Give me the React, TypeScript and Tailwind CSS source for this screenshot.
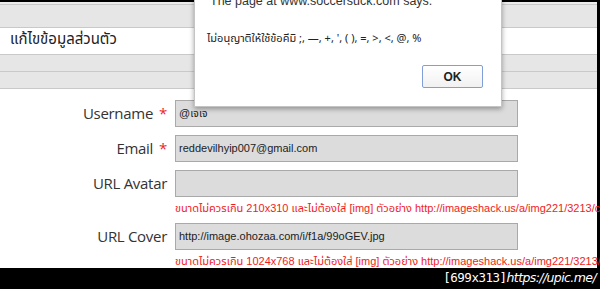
import React from 'react';

function Field({ label, required, value, hint }: { label: string; required?: boolean; value?: string; hint?: string }) {
  return (
    <div className="flex flex-col">
      <div className="flex items-center">
        <div className="w-[167px] text-right text-[15px] text-[#333] [font-family:'Open_Sans',sans-serif] tracking-[-0.3px]">
          {label}
          {required && <span className="text-[#e8262b] ml-[6px]">*</span>}
        </div>
        <div className="ml-[8px] w-[343px] h-[27px] bg-[#dcdcdc] border border-[#a9a9a9] flex items-center px-[3px] text-[11px] text-[#222] [font-family:'Liberation_Sans',Arial,'Noto_Sans_Thai',sans-serif]">
          {value}
        </div>
      </div>
      {hint && (
        <div className="ml-[175px] mt-[4px] leading-[14px] text-[11px] text-[#f01c1c] whitespace-nowrap [font-family:'Liberation_Sans',Arial,'Noto_Sans_Thai',sans-serif]">
          {hint}
        </div>
      )}
    </div>
  );
}

export default function App() {
  return (
    <div className="w-[600px] h-[289px] bg-black flex flex-col overflow-hidden">
      <div className="h-[2px] shrink-0" />
      <div className="flex-1 min-h-0 flex">
        <div className="w-[597px] bg-white relative flex flex-col">
          <div className="h-[3px] bg-[#ececec] border-b border-[#c9c9c9]" />
          <div className="h-[24px] bg-[#e6e6e6] border-b border-[#c9c9c9]" />
          <div className="h-[28px] border-b border-[#c9c9c9] flex items-center pl-[10px] text-[15px] text-[#222] [font-family:Tahoma,'Noto_Sans_Thai',sans-serif]">
            แก้ไขข้อมูลส่วนตัว
          </div>
          <div className="h-[18px] bg-[#e6e6e6] border-b border-[#c9c9c9]" />
          <div className="h-[18px] bg-[#e6e6e6] border-b border-[#c9c9c9]" />

          <div className="pt-[11px] flex flex-col gap-[8px]">
            <Field label="Username" required value="@เจเจ" />
            <Field label="Email" required value="reddevilhyip007@gmail.com" />
            <Field
              label="URL Avatar"
              hint="ขนาดไม่ควรเกิน 210x310 และไม่ต้องใส่ [img] ตัวอย่าง http://imageshack.us/a/img221/3213/cat.jpg"
            />
            <Field
              label="URL Cover"
              value="http://image.ohozaa.com/i/f1a/99oGEV.jpg"
              hint="ขนาดไม่ควรเกิน 1024x768 และไม่ต้องใส่ [img] ตัวอย่าง http://imageshack.us/a/img221/3213/cover.jpg"
            />
          </div>

          <div className="absolute left-[194px] top-[-30px] w-[308px] h-[135px] bg-white border border-[#c4c4c4] shadow-[0_2px_5px_rgba(0,0,0,0.35)] flex flex-col">
            <div className="mt-[19px] pl-[15px] text-[12.5px] leading-[18px] text-[#333] [font-family:'Liberation_Sans',Arial,sans-serif]">
              The page at www.soccersuck.com says.
            </div>
            <div className="mt-[22px] pl-[12px] text-[11px] leading-[14px] text-[#222] [font-family:Tahoma,'Noto_Sans_Thai','Liberation_Sans',sans-serif]">
              ไม่อนุญาติให้ใช้ข้อคีมิ ;, —, +, ', ( ), =, &gt;, &lt;, @, %
            </div>
            <div className="mt-auto mb-[18px] mr-[18px] self-end w-[61px] h-[23px] rounded-[2px] border border-[#7f9fd6] bg-gradient-to-b from-white to-[#f1f1f1] flex items-center justify-center text-[12px] font-bold text-[#222] [font-family:'Liberation_Sans',Arial,sans-serif]">
              OK
            </div>
          </div>
        </div>
      </div>
      <div className="h-[21px] shrink-0 flex items-center justify-end pr-[4px] text-white text-[12.5px]">
        <span className="[font-family:'DejaVu_Sans_Mono',monospace] tracking-[-0.5px]">[699x313]</span>
        <span className="[font-family:'DejaVu_Sans',sans-serif] italic tracking-[-0.6px]">https://upic.me/</span>
      </div>
    </div>
  );
}
